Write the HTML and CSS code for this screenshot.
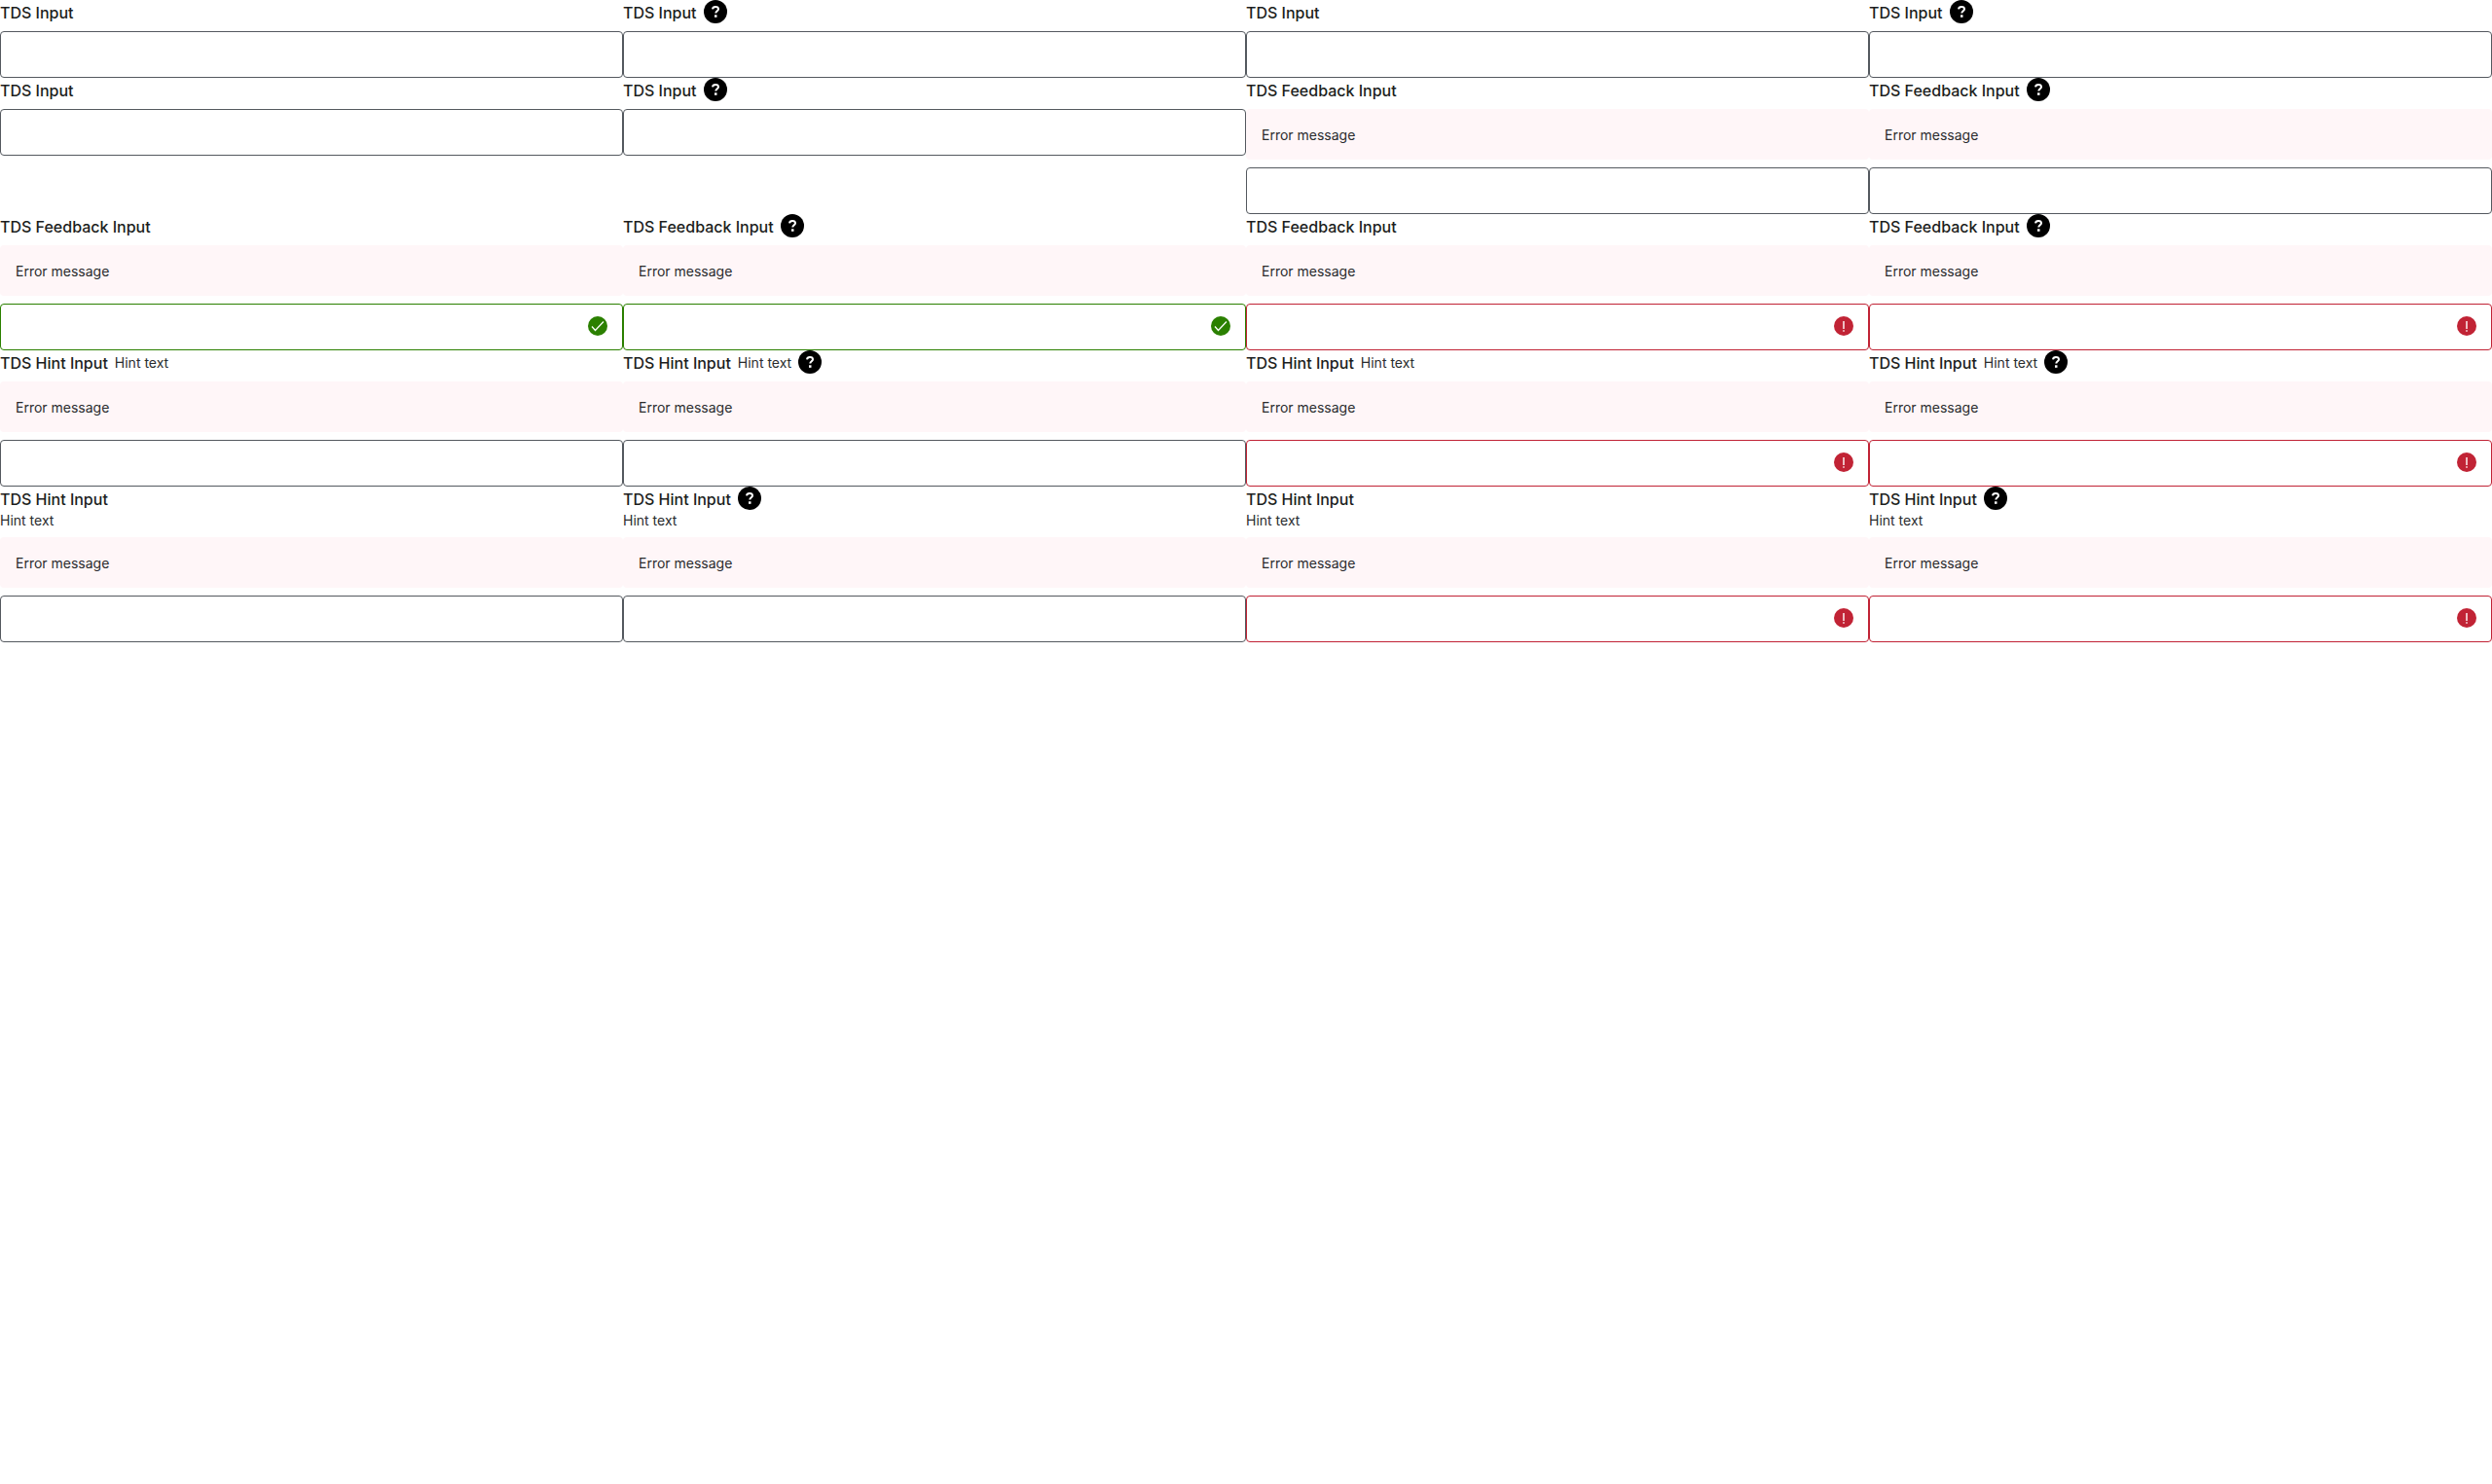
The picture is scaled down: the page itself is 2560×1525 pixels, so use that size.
FILE: index.html
```html
<!DOCTYPE html>
<html lang="en">
<head>
<meta charset="utf-8">
<title>TDS Input</title>
<link rel="stylesheet" href="styles.css">
</head>
<body>
<main class="grid" id="fields"></main>
<script src="fields.js"></script>
</body>
</html>
```
FILE: styles.css
```css
*, *::before, *::after {
  box-sizing: border-box;
}

body {
  margin: 0;
  background: #fff;
  color: #2a2c2e;
  font-family: Inter, "Liberation Sans", sans-serif;
}

.grid {
  display: grid;
  grid-template-columns: repeat(4, 1fr);
  align-items: start;
}

.heading {
  display: flex;
  gap: 7px;
  height: 24px;
  margin-bottom: 8px;
}

.label {
  color: #1c1e20;
  font-size: 16px;
  font-weight: 500;
  line-height: 26px;
}

.hint {
  font-size: 14px;
  line-height: 26px;
}

.hint-below {
  margin: -8px 0 6px;
  font-size: 14px;
  line-height: 22px;
}

.help {
  width: 24px;
  height: 24px;
  padding: 0;
  border: 0;
  background: none;
  cursor: pointer;
}

.help svg,
.status {
  display: block;
}

.feedback {
  margin-bottom: 8px;
  padding: 16px 16px 14px;
  border-radius: 4px;
  background: #fff6f8;
  font-size: 14px;
  line-height: 22px;
}

.control {
  display: flex;
  align-items: center;
  height: 48px;
  padding: 0 15px 2px;
  border: 1px solid #54595f;
  border-radius: 4px;
  background: #fff;
}

.control.success {
  border-color: #2b8000;
}

.control.error {
  border-color: #c12335;
}

.input {
  flex: 1;
  min-width: 0;
  height: 44px;
  padding: 0;
  border: 0;
  outline: 0;
  background: none;
  color: inherit;
  font: inherit;
}
```
FILE: fields.js
```js
const plain = { label: "TDS Input" };
const feedback = { label: "TDS Feedback Input", message: "Error message" };
const hint = { label: "TDS Hint Input", hint: "Hint text", message: "Error message" };

const variants = [
  plain, plain, plain, feedback,
  { ...feedback, status: "success" },
  { ...feedback, status: "error" },
  hint,
  { ...hint, status: "error" },
  { ...hint, below: true },
  { ...hint, below: true, status: "error" },
];

const helpIcon = `<svg width="24" height="24" viewBox="0 0 24 24" aria-hidden="true">
  <circle cx="12" cy="12" r="12" fill="#000"/>
  <path d="M9 9.300C9.200 7.700 10.300 6.900 12 6.900c1.800 0 3 .9 3 2.400 0 1.900-2.700 2-2.700 4.200" fill="none" stroke="#fff" stroke-width="2"/>
  <rect x="11" y="15.300" width="2.500" height="2.500" fill="#fff"/>
</svg>`;

const statusIcons = {
  success: `<svg class="status" width="20" height="20" viewBox="0 0 20 20" aria-hidden="true">
    <circle cx="10" cy="10" r="10" fill="#2b8000"/>
    <path d="M4 10.500 7.500 14.500 16 5.500" fill="none" stroke="#fff" stroke-width="1.200"/>
  </svg>`,
  error: `<svg class="status" width="20" height="20" viewBox="0 0 20 20" aria-hidden="true">
    <circle cx="10" cy="10" r="10" fill="#c12335"/>
    <path d="M10 5v8M10 14.200v1.500" fill="none" stroke="#fff" stroke-width="1.400"/>
  </svg>`,
};

function field(v, help, id) {
  return `<div class="field">
    <div class="heading">
      <label class="label" for="${id}">${v.label}</label>
      ${v.hint && !v.below ? `<span class="hint">${v.hint}</span>` : ""}
      ${help ? `<button class="help" type="button" aria-label="Help">${helpIcon}</button>` : ""}
    </div>
    ${v.below ? `<p class="hint-below">${v.hint}</p>` : ""}
    ${v.message ? `<div class="feedback">${v.message}</div>` : ""}
    <div class="control ${v.status || ""}">
      <input class="input" type="text" id="${id}">
      ${statusIcons[v.status] || ""}
    </div>
  </div>`;
}

document.getElementById("fields").innerHTML = variants
  .map((v, i) => field(v, false, `field-${i}`) + field(v, true, `field-${i}-help`))
  .join("");
```
